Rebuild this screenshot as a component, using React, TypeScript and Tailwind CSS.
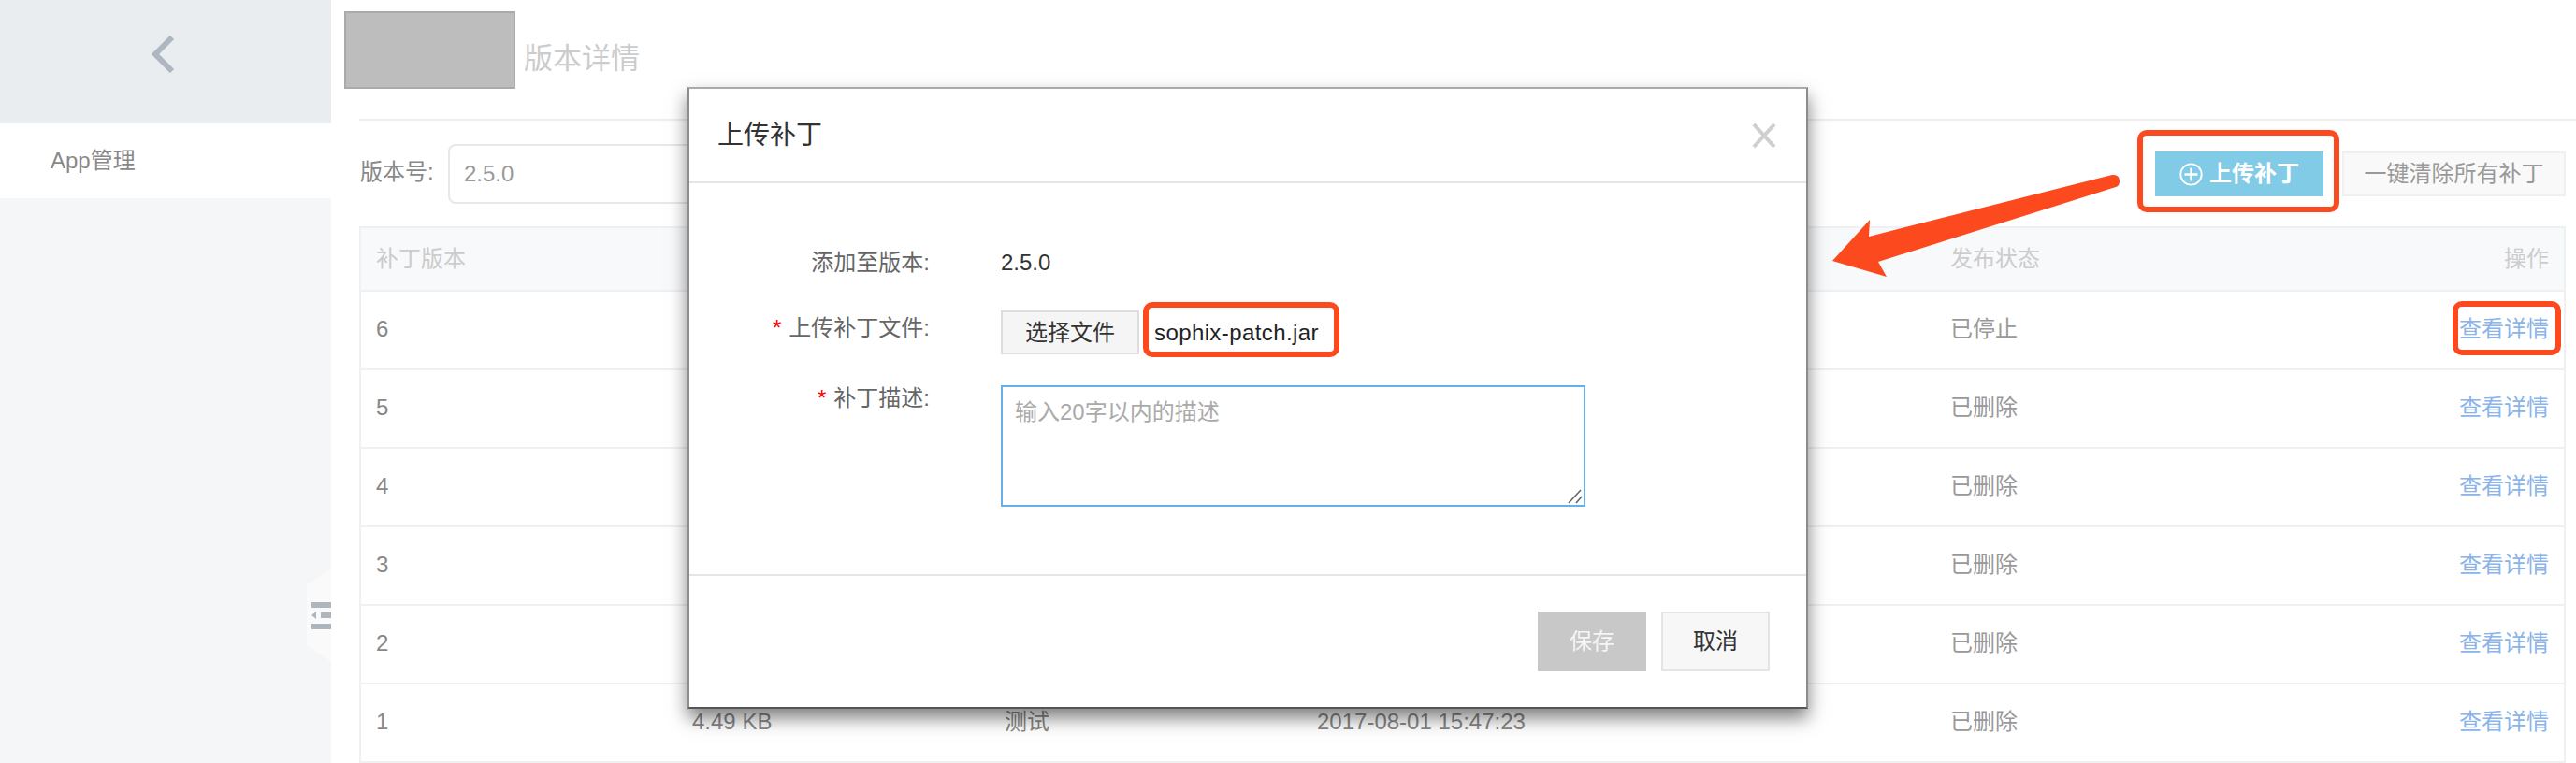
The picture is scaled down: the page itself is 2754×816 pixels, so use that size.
const rows = [
  { id: "6", status: "已停止" },
  { id: "5", status: "已删除" },
  { id: "4", status: "已删除" },
  { id: "3", status: "已删除" },
  { id: "2", status: "已删除" },
  { id: "1", status: "已删除", size: "4.49 KB", desc: "测试", time: "2017-08-01 15:47:23" },
];

function Required() {
  return <span className="mr-[8px] text-[24px] leading-[20px] text-[#f00]">*</span>;
}

function UploadDialog() {
  return (
    <div className="absolute left-[735px] top-[93px] flex h-[665px] w-[1198px] flex-col border-2 border-t-[#aaaaaa] border-x-[#8c8c8c] border-b-[#555555] bg-white shadow-[0_10px_18px_rgba(0,0,0,0.5)]">
      <div className="flex h-[101px] shrink-0 items-center justify-between border-b-2 border-[#e5e5e5] pl-[30px] pr-[32px]">
        <span className="text-[28px] text-[#333]">上传补丁</span>
        <svg width="26" height="26" viewBox="0 0 26 26" className="text-[#cfcfcf]">
          <path d="M2 1 L24 25 M24 1 L2 25" stroke="currentColor" strokeWidth="4" fill="none" />
        </svg>
      </div>

      <div className="h-[418px] shrink-0 pt-[61px] text-[24px]">
        <div className="flex h-[47px] items-center">
          <div className="w-[257px] text-right text-[#666]">添加至版本:</div>
          <div className="ml-[76px] text-[#333]">2.5.0</div>
        </div>
        <div className="mt-[28px] flex h-[47px] items-start">
          <div className="mt-[4px] w-[257px] text-right leading-[30px] text-[#666]">
            <Required />
            上传补丁文件:
          </div>
          <button className="ml-[76px] h-[47px] w-[148px] border-2 border-[#dddddd] bg-[#f5f5f5] text-[24px] text-[#333]">
            选择文件
          </button>
          <span className="ml-[16px] leading-[47px] tracking-[0.4px] text-[#222]">sophix-patch.jar</span>
        </div>
        <div className="mt-[33px] flex items-start">
          <div className="w-[257px] text-right leading-[28px] text-[#666]">
            <Required />
            补丁描述:
          </div>
          <div className="relative ml-[76px] h-[130px] w-[625px]">
            <textarea
              readOnly
              placeholder="输入20字以内的描述"
              className="h-full w-full resize-none border-2 border-[#66afe9] px-[13px] py-[12px] text-[24px] leading-[30px] outline-none placeholder:text-[#aaa]"
            />
            <svg width="16" height="16" viewBox="0 0 16 16" className="absolute bottom-[3px] right-[3px]">
              <path d="M1 15 L14 1 M9 15 L15 8" stroke="#666" strokeWidth="1.6" fill="none" />
            </svg>
          </div>
        </div>
      </div>

      <div className="flex flex-1 items-start justify-end gap-[16px] border-t-2 border-[#e5e5e5] pr-[39px] pt-[38px] text-[24px]">
        <button className="h-[64px] w-[116px] bg-[#c8c8c8] text-[24px] text-[#f5f5f5]">保存</button>
        <button className="h-[64px] w-[116px] border-2 border-[#e5e5e5] bg-[#f7f7f7] text-[24px] text-[#333]">取消</button>
      </div>
    </div>
  );
}

export default function App() {
  return (
    <div className="relative flex h-[816px] w-[2754px] overflow-hidden bg-white font-['Liberation_Sans','Noto_Sans_CJK_SC',sans-serif] text-[24px]">
      {/* sidebar */}
      <aside className="relative flex w-[354px] shrink-0 flex-col bg-[#f4f6f8]">
        <div className="h-[132px] bg-[#e9edf0] pl-[161px] pt-[38px]">
          <svg width="26" height="40" viewBox="0 0 26 40">
            <path d="M23 2 L5 20 L23 38" stroke="#aeb7c0" strokeWidth="6" fill="none" />
          </svg>
        </div>
        <div className="flex h-[80px] items-center bg-white pl-[54px] text-[#888]">App管理</div>
        <svg width="26" height="100" viewBox="0 0 26 100" className="absolute left-[328px] top-[608px]">
          <path d="M26 0 L0 18 L0 82 L26 100 Z" fill="#fafafa" />
          <rect x="5" y="36" width="21" height="6" fill="#aeb6be" />
          <path d="M5 50 L10 46 L10 54 Z" fill="#aeb6be" />
          <rect x="15" y="47" width="11" height="6" fill="#aeb6be" />
          <rect x="5" y="59" width="21" height="6" fill="#aeb6be" />
        </svg>
      </aside>

      {/* main content */}
      <main className="flex min-w-0 flex-1 flex-col">
        <div className="flex h-[127px] items-start pl-[14px] pt-[12px]">
          <div className="h-[83px] w-[183px] border-2 border-[#aaaaaa] bg-[#bdbdbd]" />
          <h1 className="ml-[9px] mt-[34px] text-[31px] leading-[34px] text-[#ccc]">版本详情</h1>
        </div>
        <div className="ml-[30px] h-[2px] bg-[#eeeeee]" />

        <div className="mb-[24px] ml-[30px] mr-[11px] mt-[25px] flex h-[64px] items-center">
          <span className="ml-[1px] w-[94px] pb-[4px] text-[#888]">版本号:</span>
          <div className="flex h-[64px] w-[560px] items-center rounded-[8px] border-2 border-[#e8e8e8] pl-[15px] text-[#999]">2.5.0</div>
          <div className="ml-auto flex gap-[20px]">
            <button className="flex h-[48px] w-[180px] items-center justify-center gap-[7px] bg-[#81cbe6] text-[24px] font-bold text-white">
              <svg width="25" height="25" viewBox="0 0 25 25">
                <circle cx="12.5" cy="12.5" r="11.2" stroke="white" strokeWidth="1.8" fill="none" />
                <path d="M12.5 5.5 V19.5 M5.5 12.5 H19.5" stroke="white" strokeWidth="2.4" />
              </svg>
              上传补丁
            </button>
            <button className="h-[48px] w-[239px] border-2 border-[#f0f0f0] bg-[#f9f9f9] text-[24px] text-[#999]">一键清除所有补丁</button>
          </div>
        </div>

        <div className="ml-[30px] mr-[11px] border-x-2 border-[#eef1f4]">
          <div className="grid h-[70px] grid-cols-[338px_334px_334px_677px_1fr] items-center border-y-2 border-[#eef1f4] bg-[#f8f9fb] text-[#ccc]">
            <div className="pl-[16px]">补丁版本</div>
            <div />
            <div />
            <div />
            <div className="flex justify-between pl-[16px] pr-[16px]">
              <span>发布状态</span>
              <span>操作</span>
            </div>
          </div>
          {rows.map((row) => (
            <div key={row.id} className="grid h-[84px] grid-cols-[338px_334px_334px_677px_1fr] items-center border-b-2 border-[#eef1f4] pb-[2px] text-[#888]">
              <div className="pl-[16px]">{row.id}</div>
              <div className="pl-[16px]">{row.size}</div>
              <div className="pl-[16px]">{row.desc}</div>
              <div className="pl-[16px]">{row.time}</div>
              <div className="flex justify-between pl-[16px] pr-[16px]">
                <span className="text-[#999]">{row.status}</span>
                <span className="text-[#8ab4ea]">查看详情</span>
              </div>
            </div>
          ))}
        </div>
      </main>

      <UploadDialog />

      {/* screenshot annotations */}
      <div className="absolute left-[2285px] top-[139px] h-[88px] w-[216px] rounded-[10px] border-[6px] border-[#fc4a1e]" />
      <div className="absolute left-[1222px] top-[323px] h-[59px] w-[210px] rounded-[10px] border-[6px] border-[#fc4a1e]" />
      <div className="absolute left-[2622px] top-[322px] h-[58px] w-[116px] rounded-[10px] border-[6px] border-[#fc4a1e]" />
      <svg width="320" height="120" viewBox="0 0 320 120" className="absolute left-[1950px] top-[180px]">
        <path d="M9 99 L49 55 L48 73 L308 7 Q316 6 316 14 Q316 19 312 20 L58 100 L67 116 Z" fill="#fc4a1e" />
      </svg>
    </div>
  );
}
